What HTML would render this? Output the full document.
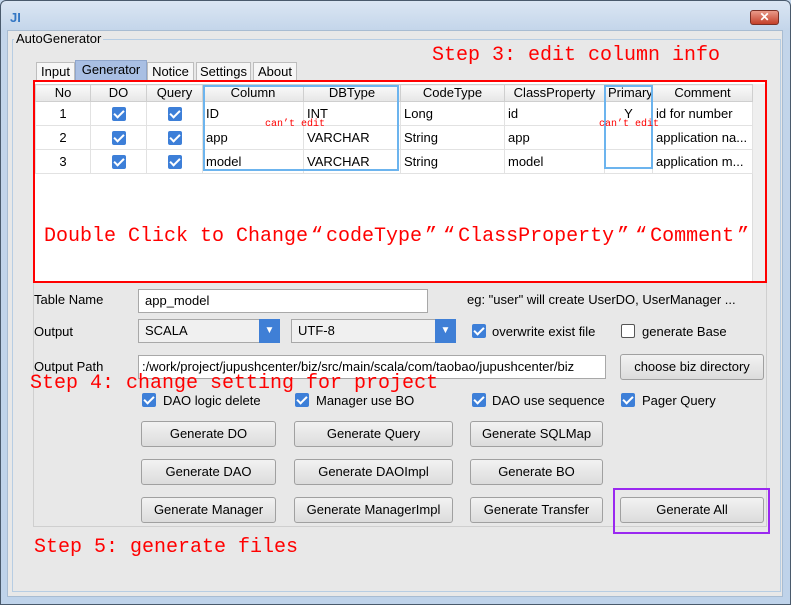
<!DOCTYPE html>
<html><head><meta charset="utf-8"><style>
*{box-sizing:border-box;margin:0;padding:0}
body{width:791px;height:605px;overflow:hidden;background:#c4d7ec;font-family:"Liberation Sans","Noto Sans CJK SC",sans-serif;font-size:13px;color:#000;position:relative}
.a{position:absolute}
.win{left:0;top:0;width:791px;height:605px;border:1px solid #4a5a6c;border-radius:6px 6px 0 0;background:linear-gradient(#dbe6f3,#c3d5ea 30px,#bfd3ea)}
.body{left:7px;top:30px;width:776px;height:567px;background:#e8e8e8;border:1px solid #a8bcd2}
.grp{left:12px;top:39px;width:769px;height:553px;border:1px solid #b7cde3}
.tab{top:62px;height:19px;border:1px solid #bdbdbd;border-bottom:none;background:#f6f6f6;text-align:center;line-height:18px}
.btn{height:26px;border:1px solid #a0a0a0;border-radius:3px;background:linear-gradient(#f2f2f2,#dcdcdc);text-align:center;line-height:24px}
.red{color:#f00;font-family:"Liberation Mono","Noto Sans CJK SC",monospace;font-size:20px;line-height:22px;white-space:nowrap}
.q{display:inline-block;width:18px;text-align:center}
.cb{width:14px;height:14px;background:#3d7fd8;border-radius:2px}
.cb::after{content:"";position:absolute;left:4px;top:1px;width:4px;height:8px;border:solid #fff;border-width:0 2px 2px 0;transform:rotate(45deg)}
.cbe{width:14px;height:14px;background:#fff;border:1px solid #555;border-radius:2px}
.inp{height:24px;background:#fff;border:1px solid #a8a8a8;padding-left:6px;line-height:22px;white-space:nowrap;overflow:hidden}
table{border-collapse:collapse;table-layout:fixed}
td,th{height:24px;border:1px solid #e2e2e2;white-space:nowrap;overflow:hidden;padding:0 3px;font-weight:normal}
th{height:17px;background:linear-gradient(#fafafa,#e6e6e6);border-color:#cfcfcf;text-align:center;line-height:16px}
td.c{text-align:center}
</style></head><body>
<div class="a win"></div>
<div class="a" style="left:10px;top:11px;width:16px;height:13px;color:#3477c4;font-weight:bold;font-size:13px;line-height:13px">JI</div>
<div class="a" style="left:750px;top:10px;width:29px;height:15px;border-radius:3px;background:linear-gradient(#e99a8a,#c4402a);border:1px solid #7a3026;color:#fff;font-size:12px;text-align:center;line-height:13px;font-weight:bold">✕</div>
<div class="a body"></div>
<div class="a grp"></div>
<div class="a" style="left:14px;top:31px;background:#e8e8e8;padding:0 2px;font-size:13px">AutoGenerator</div>
<div class="a red" style="left:432px;top:45px">Step 3: edit column info</div>

<div class="a tab" style="left:36px;width:39px">Input</div>
<div class="a tab" style="left:75px;top:60px;height:21px;width:72px;background:#a9bfe3;border-color:#8fa6cc">Generator</div>
<div class="a tab" style="left:147px;width:47px">Notice</div>
<div class="a tab" style="left:196px;width:55px">Settings</div>
<div class="a tab" style="left:253px;width:44px">About</div>

<div class="a" style="left:33px;top:80px;width:734px;height:203px;background:#fff"></div>
<div class="a" style="left:752px;top:84px;width:14px;height:197px;background:#efefef;border-left:1px solid #ddd"></div>
<table class="a" style="left:35px;top:84px;width:717px">
<colgroup><col style="width:55px"><col style="width:56px"><col style="width:56px"><col style="width:101px"><col style="width:97px"><col style="width:104px"><col style="width:100px"><col style="width:48px"><col style="width:100px"></colgroup>
<tr><th>No</th><th>DO</th><th>Query</th><th>Column</th><th>DBType</th><th>CodeType</th><th>ClassProperty</th><th>Primary</th><th>Comment</th></tr>
<tr><td class="c">1</td><td class="c"><span class="cb" style="display:inline-block;position:relative;vertical-align:middle"></span></td><td class="c"><span class="cb" style="display:inline-block;position:relative;vertical-align:middle"></span></td><td>ID</td><td>INT</td><td>Long</td><td>id</td><td class="c">Y</td><td>id for number</td></tr>
<tr><td class="c">2</td><td class="c"><span class="cb" style="display:inline-block;position:relative;vertical-align:middle"></span></td><td class="c"><span class="cb" style="display:inline-block;position:relative;vertical-align:middle"></span></td><td>app</td><td>VARCHAR</td><td>String</td><td>app</td><td></td><td>application na...</td></tr>
<tr><td class="c">3</td><td class="c"><span class="cb" style="display:inline-block;position:relative;vertical-align:middle"></span></td><td class="c"><span class="cb" style="display:inline-block;position:relative;vertical-align:middle"></span></td><td>model</td><td>VARCHAR</td><td>String</td><td>model</td><td></td><td>application m...</td></tr>
</table>
<div class="a" style="left:203px;top:85px;width:196px;height:86px;border:2px solid #6cb4ee"></div>
<div class="a" style="left:604px;top:85px;width:49px;height:84px;border:2px solid #6cb4ee"></div>
<div class="a" style="left:265px;top:119px;color:#f00;font-family:'Liberation Mono',monospace;font-size:10px">can’t edit</div>
<div class="a" style="left:599px;top:119px;color:#f00;font-family:'Liberation Mono',monospace;font-size:10px">can’t edit</div>
<div class="a" style="left:33px;top:80px;width:734px;height:203px;border:2px solid #f00"></div>
<div class="a red" style="left:44px;top:226px">Double Click to Change<span class="q">“</span>codeType<span class="q">”</span><span class="q">“</span>ClassProperty<span class="q">”</span><span class="q">“</span>Comment<span class="q">”</span></div>

<div class="a" style="left:33px;top:283px;width:734px;height:244px;border:1px solid #cfcfcf;border-top:none"></div>
<div class="a" style="left:34px;top:292px">Table Name</div>
<div class="a inp" style="left:138px;top:289px;width:290px">app_model</div>
<div class="a" style="left:467px;top:292px">eg: "user" will create UserDO, UserManager ...</div>

<div class="a" style="left:34px;top:324px">Output</div>
<div class="a inp" style="left:138px;top:319px;width:142px;height:24px;background:#f0f0f0">SCALA</div>
<div class="a" style="left:259px;top:319px;width:21px;height:24px;background:#3f7fd6;color:#fff;font-size:10px;text-align:center;line-height:24px">▼</div>
<div class="a inp" style="left:291px;top:319px;width:165px;height:24px;background:#f0f0f0">UTF-8</div>
<div class="a" style="left:435px;top:319px;width:21px;height:24px;background:#3f7fd6;color:#fff;font-size:10px;text-align:center;line-height:24px">▼</div>
<div class="a cb" style="left:472px;top:324px"></div><div class="a" style="left:492px;top:324px">overwrite exist file</div>
<div class="a cbe" style="left:621px;top:324px"></div><div class="a" style="left:642px;top:324px">generate Base</div>

<div class="a" style="left:34px;top:359px">Output Path</div>
<div class="a inp" style="left:138px;top:355px;width:468px;padding-left:3px">:/work/project/jupushcenter/biz/src/main/scala/com/taobao/jupushcenter/biz</div>
<div class="a btn" style="left:620px;top:354px;width:144px">choose biz directory</div>
<div class="a red" style="left:30px;top:373px">Step 4: change setting for project</div>

<div class="a cb" style="left:142px;top:393px"></div><div class="a" style="left:163px;top:393px">DAO logic delete</div>
<div class="a cb" style="left:295px;top:393px"></div><div class="a" style="left:316px;top:393px">Manager use BO</div>
<div class="a cb" style="left:472px;top:393px"></div><div class="a" style="left:492px;top:393px">DAO use sequence</div>
<div class="a cb" style="left:621px;top:393px"></div><div class="a" style="left:642px;top:393px">Pager Query</div>

<div class="a btn" style="left:141px;top:421px;width:135px">Generate DO</div>
<div class="a btn" style="left:294px;top:421px;width:159px">Generate Query</div>
<div class="a btn" style="left:470px;top:421px;width:133px">Generate SQLMap</div>
<div class="a btn" style="left:141px;top:459px;width:135px">Generate DAO</div>
<div class="a btn" style="left:294px;top:459px;width:159px">Generate DAOImpl</div>
<div class="a btn" style="left:470px;top:459px;width:133px">Generate BO</div>
<div class="a btn" style="left:141px;top:497px;width:135px">Generate Manager</div>
<div class="a btn" style="left:294px;top:497px;width:159px">Generate ManagerImpl</div>
<div class="a btn" style="left:470px;top:497px;width:133px">Generate Transfer</div>
<div class="a btn" style="left:620px;top:497px;width:144px">Generate All</div>
<div class="a" style="left:613px;top:488px;width:157px;height:46px;border:2px solid #9a28f0"></div>
<div class="a red" style="left:34px;top:537px">Step 5: generate files</div>
</body></html>
